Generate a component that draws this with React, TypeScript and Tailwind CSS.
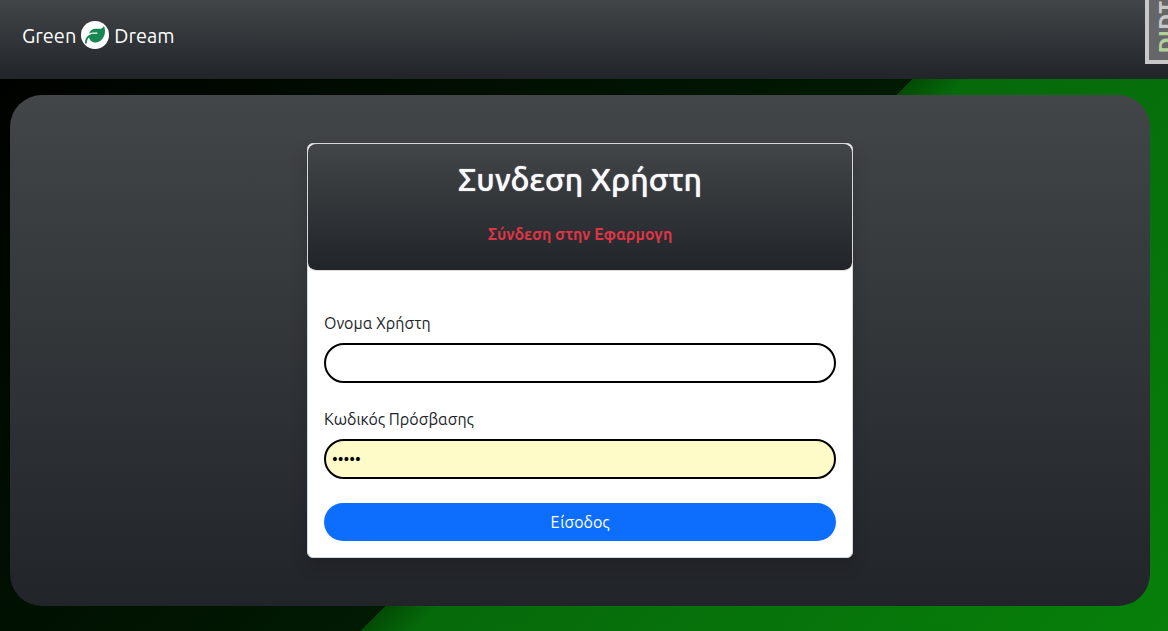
import { FaLeaf } from "react-icons/fa6";

const surface = "bg-linear-to-b from-[#434648] to-[#212429]";
const field =
  "block h-10 w-full rounded-full border-2 border-black px-1.5 text-base text-black";

export default function App() {
  return (
    <div className="relative flex min-h-screen flex-col overflow-hidden bg-[linear-gradient(135deg,#000_0%,#011a02_55.1%,#034a05_55.1%,#06690a_58%,#077f0a_100%)] font-['Ubuntu','Noto_Sans',sans-serif] text-base text-[#212529]">
      <header className={`px-[22px] pt-5 pb-[29px] ${surface}`}>
        <a
          href="#"
          className="inline-flex h-[30px] items-center gap-[5px] text-xl leading-7 text-white"
        >
          <span className="pt-0.5">Green</span>
          <span className="flex size-7 items-center justify-center rounded-full bg-white text-[#198754]">
            <FaLeaf size={20} />
          </span>
          <span className="pt-0.5">Dream</span>
        </a>
      </header>

      <main
        className={`mt-4 mr-[18px] mb-[25px] ml-2.5 flex grow items-start justify-center rounded-4xl px-4 py-12 ${surface}`}
      >
        <section className="w-full max-w-[546px] rounded-md border border-[#d5d6d7] bg-white shadow-[0_8px_16px_rgba(0,0,0,0.15)]">
          <div
            className={`rounded-lg border-b border-[#dcdddf] bg-clip-padding px-4 pt-4 pb-6 text-center ${surface}`}
          >
            <h1 className="text-[32px] leading-[38px] font-medium text-[#f8f9fa] [text-shadow:0_0_1px_#f8f9fa]">
              Συνδεση Χρήστη
            </h1>
            <p className="mt-6 text-base leading-6 font-bold text-[#dc3545]">
              Σύνδεση στην Εφαρμογη
            </p>
          </div>
          <form className="px-4 pt-10 pb-4" onSubmit={(e) => e.preventDefault()}>
            <label htmlFor="username" className="mb-2 block leading-6">
              Ονομα Χρήστη
            </label>
            <input id="username" type="text" className={`${field} bg-white`} />
            <label htmlFor="password" className="mt-6 mb-2 block leading-6">
              Κωδικός Πρόσβασης
            </label>
            <input
              id="password"
              type="password"
              defaultValue="12345"
              className={`${field} bg-[#fffbc8]`}
            />
            <button
              type="submit"
              className="mt-6 block h-[38px] w-full rounded-full bg-[#0d6efd] text-white"
            >
              Είσοδος
            </button>
          </form>
        </section>
      </main>

      <button
        type="button"
        className="absolute top-0 right-0 flex h-16 w-[23px] items-end overflow-hidden border-b-4 border-l-4 border-[#c8c8c8] bg-[#666668] pb-1.5"
      >
        <span className="shrink-0 rotate-180 font-['Open_Sans',sans-serif] text-[22px] leading-[32px] font-bold text-[#c8c8c8] [writing-mode:vertical-rl]">
          <span className="text-[#b3d09c]">DJ</span>DT
        </span>
      </button>
    </div>
  );
}
